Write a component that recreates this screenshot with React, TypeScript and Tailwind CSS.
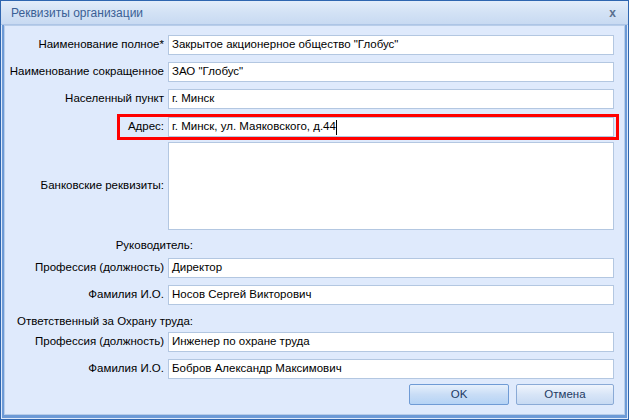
import React from 'react';

const font = { fontFamily: '"Liberation Sans", Arial, sans-serif' };

function Field({ label, value, top = 0, caret = false }: { label: string; value: string; top?: number; caret?: boolean }) {
  return (
    <div className="flex items-center" style={{ marginTop: top }}>
      <div className="w-[159px] pr-[4px] text-right text-[11.5px] text-black whitespace-nowrap">{label}</div>
      <div className="w-[446px] h-[20px] border border-[#b3c7e1] bg-white flex items-center px-[3px] text-[11.5px] text-black whitespace-nowrap overflow-hidden">
        {value}
        {caret && <span className="inline-block w-[1px] h-[15px] bg-black" />}
      </div>
    </div>
  );
}

function Heading({ text }: { text: string }) {
  return (
    <div className="w-[184px] text-right text-[11.5px] text-black whitespace-nowrap h-[14px] leading-[14px]">{text}</div>
  );
}

export default function App() {
  return (
    <div
      className="w-[629px] h-[420px] bg-[#dfeafb] border border-[#2f66b0] flex flex-col overflow-hidden"
      style={font}
    >
      <div className="h-[24px] shrink-0 flex items-center justify-between pl-[10px] pr-[12px] bg-gradient-to-b from-[#e3edfa] via-[#d3e2f5] to-[#c8daf2] border-b border-[#adc5e6]">
        <span className="text-[12px] text-[#3a5f95]">Реквизиты организации</span>
        <span className="text-[12px] font-bold text-[#5a6f8e] leading-none">x</span>
      </div>
      <div className="flex-1 flex mx-[1px] mb-[1px] border-l-[2px] border-r-[2px] border-b-[3px] border-[#6d9ad6]">
        <div className="flex-1 border border-[#b8cde9] bg-[#dfeafc] pt-[9px] pl-[4px] flex flex-col">
          <Field label="Наименование полное*" value={'Закрытое акционерное общество "Глобус"'} />
          <Field label="Наименование сокращенное" value={'ЗАО "Глобус"'} top={7} />
          <Field label="Населенный пункт" value="г. Минск" top={7} />
          <div className="relative" style={{ marginTop: 8 }}>
            <Field label="Адрес:" value="г. Минск, ул. Маяковского, д.44" caret />
            <div className="absolute left-[108px] top-[-3px] w-[502px] h-[26px] border-[3px] border-[#ff0000] pointer-events-none" />
          </div>
          <div className="flex items-center mt-[5px]">
            <div className="w-[159px] pr-[4px] text-right text-[11.5px] text-black whitespace-nowrap">Банковские реквизиты:</div>
            <div className="w-[446px] h-[88px] border border-[#b3c7e1] bg-white" />
          </div>
          <div className="mt-[8px]">
            <Heading text="Руководитель:" />
          </div>
          <Field label="Профессия (должность)" value="Директор" top={6} />
          <Field label="Фамилия И.О." value="Носов Сергей Викторович" top={7} />
          <div className="mt-[9px]">
            <Heading text="Ответственный за Охрану труда:" />
          </div>
          <Field label="Профессия (должность)" value="Инженер по охране труда" top={4} />
          <Field label="Фамилия И.О." value="Бобров Александр Максимович" top={7} />
          <div className="flex justify-end gap-[7px] mt-[5px] pr-[10px]">
            <button className="w-[100px] h-[21px] rounded-[2px] border border-[#6f9bd5] bg-gradient-to-b from-[#e6f0fc] via-[#c9ddf6] to-[#b5d3f5] text-[11.5px] text-[#1e3a64]">
              OK
            </button>
            <button className="w-[98px] h-[21px] rounded-[2px] border border-[#8aaad6] bg-gradient-to-b from-[#f0f5fd] via-[#d8e5f7] to-[#c7daf3] text-[11.5px] text-[#1e3a64]">
              Отмена
            </button>
          </div>
        </div>
      </div>
    </div>
  );
}
